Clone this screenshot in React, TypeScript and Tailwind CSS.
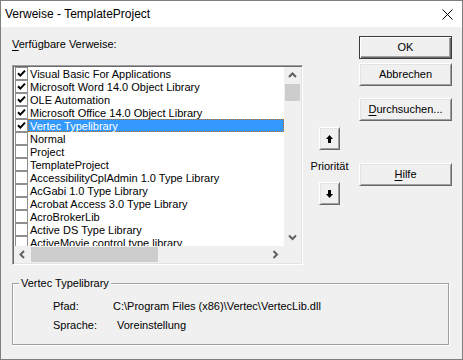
import type { ReactNode } from 'react';

type Ref = { name: string; checked: boolean; selected?: boolean };

const refs: Ref[] = [
  { name: 'Visual Basic For Applications', checked: true },
  { name: 'Microsoft Word 14.0 Object Library', checked: true },
  { name: 'OLE Automation', checked: true },
  { name: 'Microsoft Office 14.0 Object Library', checked: true },
  { name: 'Vertec Typelibrary', checked: true, selected: true },
  { name: 'Normal', checked: false },
  { name: 'Project', checked: false },
  { name: 'TemplateProject', checked: false },
  { name: 'AccessibilityCplAdmin 1.0 Type Library', checked: false },
  { name: 'AcGabi 1.0 Type Library', checked: false },
  { name: 'Acrobat Access 3.0 Type Library', checked: false },
  { name: 'AcroBrokerLib', checked: false },
  { name: 'Active DS Type Library', checked: false },
  { name: 'ActiveMovie control type library', checked: false },
];

function Chevron({ dir }: { dir: 'up' | 'down' | 'left' | 'right' }) {
  const d = {
    up: 'M1 5 L4.5 1.5 L8 5',
    down: 'M1 1.5 L4.5 5 L8 1.5',
    left: 'M5 1 L1.5 4.5 L5 8',
    right: 'M1.5 1 L5 4.5 L1.5 8',
  }[dir];
  const horiz = dir === 'up' || dir === 'down';
  return (
    <svg width={horiz ? 9 : 7} height={horiz ? 7 : 9} viewBox={horiz ? '0 0 9 7' : '0 0 7 9'}>
      <path d={d} fill="none" stroke="#606060" strokeWidth="2" />
    </svg>
  );
}

function CheckBox({ checked }: { checked: boolean }) {
  return (
    <div className="w-[13px] h-[13px] shrink-0 border border-[#8f8f8f] bg-white flex items-center justify-center">
      {checked ? (
        <svg width="11" height="11" viewBox="0 0 11 11">
          <path d="M2 5.2 L4.3 7.6 L9 2.6" fill="none" stroke="#000" strokeWidth="2" />
        </svg>
      ) : null}
    </div>
  );
}

function Button({ children, isDefault = false, className = '' }: { children: ReactNode; isDefault?: boolean; className?: string }) {
  return (
    <div
      className={`w-[93px] h-[23px] flex items-center justify-center bg-[#f0f0f0] border ${
        isDefault
          ? 'border-[#3c3c3c] shadow-[inset_1px_1px_0_#fff,inset_-1px_-1px_0_#696969,inset_-2px_-2px_0_#a0a0a0]'
          : 'border-t-white border-l-white border-r-[#696969] border-b-[#696969] shadow-[inset_1px_1px_0_#e3e3e3,inset_-1px_-1px_0_#a0a0a0]'
      } ${className}`}
    >
      {children}
    </div>
  );
}

function ArrowButton({ dir }: { dir: 'up' | 'down' }) {
  return (
    <div className="w-[21px] h-[23px] flex items-center justify-center bg-[#f0f0f0] border border-t-white border-l-white border-r-[#696969] border-b-[#696969] shadow-[inset_1px_1px_0_#e3e3e3,inset_-1px_-1px_0_#a0a0a0]">
      <svg width="7" height="8" viewBox="0 0 7 8">
        {dir === 'up' ? (
          <path d="M3.5 0 L7 4 L5 4 L5 8 L2 8 L2 4 L0 4 Z" fill="#000" />
        ) : (
          <path d="M3.5 8 L7 4 L5 4 L5 0 L2 0 L2 4 L0 4 Z" fill="#000" />
        )}
      </svg>
    </div>
  );
}

export default function App() {
  return (
    <div className="w-[463px] h-[360px] border border-[#7f7f7f] bg-[#f0f0f0] flex flex-col font-['Liberation_Sans',Arial,sans-serif] text-[11px] text-black">
      <div className="h-[26px] bg-white flex items-center justify-between pl-[4px] pr-[9px]">
        <span className="text-[12px]">Verweise - TemplateProject</span>
        <svg width="11" height="11" viewBox="0 0 11 11">
          <path d="M0.5 0.5 L10.5 10.5 M10.5 0.5 L0.5 10.5" stroke="#000" strokeWidth="1" />
        </svg>
      </div>

      <div className="flex flex-col pl-[11px]">
        <div className="flex">
          <div className="w-[291px] flex flex-col">
            <div className="mt-[11px] h-[13px] leading-[13px]">
              <span className="underline underline-offset-2">V</span>erfügbare Verweise:
            </div>

            <div className="mt-[14px] w-[291px] h-[200px] p-[1px] flex flex-col border border-t-[#a0a0a0] border-l-[#a0a0a0] border-r-white border-b-white shadow-[inset_1px_1px_0_#696969,inset_-1px_-1px_0_#e3e3e3]">
              <div className="flex h-[179px]">
                <div className="flex-1 bg-white overflow-hidden">
                  {refs.map((r) => (
                    <div key={r.name} className="h-[13px] flex items-center pl-[1px]">
                      <CheckBox checked={r.checked} />
                      <div
                        className={`flex-1 h-[13px] leading-[12px] pl-[1px] whitespace-nowrap ${
                          r.selected ? 'bg-[#3399ff] text-white border border-dotted border-[#c86a10]' : 'border border-transparent'
                        }`}
                      >
                        {r.name}
                      </div>
                    </div>
                  ))}
                </div>
                <div className="w-[17px] bg-[#f0f0f0] flex flex-col">
                  <div className="h-[17px] flex items-center justify-center">
                    <Chevron dir="up" />
                  </div>
                  <div className="mx-[1px] h-[17px] bg-[#cdcdcd]" />
                  <div className="flex-1" />
                  <div className="h-[17px] flex items-center justify-center">
                    <Chevron dir="down" />
                  </div>
                </div>
              </div>
              <div className="flex h-[17px]">
                <div className="flex-1 bg-[#f0f0f0] flex items-center">
                  <div className="w-[17px] h-[17px] flex items-center justify-center">
                    <Chevron dir="left" />
                  </div>
                  <div className="w-[127px] h-[15px] bg-[#cdcdcd]" />
                  <div className="flex-1" />
                  <div className="w-[17px] h-[17px] flex items-center justify-center">
                    <Chevron dir="right" />
                  </div>
                </div>
                <div className="w-[17px] bg-[#f0f0f0]" />
              </div>
            </div>
          </div>

          <div className="ml-[6px] w-[41px] flex flex-col items-center">
            <div className="mt-[100px]">
              <ArrowButton dir="up" />
            </div>
            <div className="mt-[10px] h-[13px] leading-[13px]">Priorität</div>
            <div className="mt-[9px]">
              <ArrowButton dir="down" />
            </div>
          </div>

          <div className="ml-[9px] flex flex-col">
            <Button isDefault className="mt-[9px]">OK</Button>
            <Button className="mt-[4px]">Abbrechen</Button>
            <Button className="mt-[12px]">
              <span>
                <span className="underline underline-offset-2">D</span>urchsuchen...
              </span>
            </Button>
            <Button className="mt-[42px]">
              <span>
                <span className="underline underline-offset-2">H</span>ilfe
              </span>
            </Button>
          </div>
        </div>

        <div className="relative mt-[18px] w-[437px] h-[62px] border border-[#a0a0a0] shadow-[1px_1px_0_#fff,inset_1px_1px_0_#fff]">
          <span className="absolute -top-[8px] left-[6px] bg-[#f0f0f0] px-[2px] leading-[14px]">Vertec Typelibrary</span>
          <div className="pt-[16px] pl-[40px] flex flex-col gap-[6px]">
            <div className="flex h-[13px] leading-[13px]">
              <span className="w-[60px]">Pfad:</span>
              <span>C:\Program Files (x86)\Vertec\VertecLib.dll</span>
            </div>
            <div className="flex h-[13px] leading-[13px]">
              <span className="w-[60px]">Sprache:</span>
              <span className="pl-[4px]">Voreinstellung</span>
            </div>
          </div>
        </div>
      </div>
    </div>
  );
}
